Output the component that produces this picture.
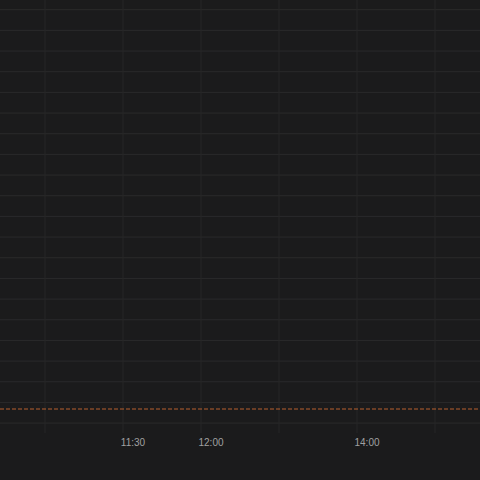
import React from 'react';

const hLines = Array.from({ length: 21 }, (_, i) => 9.7 + i * 20.67).filter((y) => y < 434);
const vLines = [45, 123, 201, 279, 357, 435];
const ticks = [
  { x: 133, label: '11:30' },
  { x: 211, label: '12:00' },
  { x: 367, label: '14:00' },
];

export default function App() {
  return (
    <div className="w-[480px] h-[480px] bg-[#1b1b1c] overflow-hidden" style={{ fontFamily: '"Liberation Sans", Arial, sans-serif' }}>
      <svg width="480" height="480" className="block">
        {hLines.map((y) => (
          <line key={y} x1="0" x2="480" y1={y} y2={y} stroke="#2a2a2b" strokeWidth="1" />
        ))}
        {vLines.map((x) => (
          <line key={x} x1={x} x2={x} y1="0" y2="433" stroke="#262627" strokeWidth="1" />
        ))}
        <line x1="0" x2="480" y1="409" y2="409" stroke="#b8602f" strokeWidth="1" strokeDasharray="4 2" />
        {ticks.map((t) => (
          <text key={t.label} x={t.x} y="446" textAnchor="middle" fontSize="10" fill="#a0a0a1">
            {t.label}
          </text>
        ))}
      </svg>
    </div>
  );
}
